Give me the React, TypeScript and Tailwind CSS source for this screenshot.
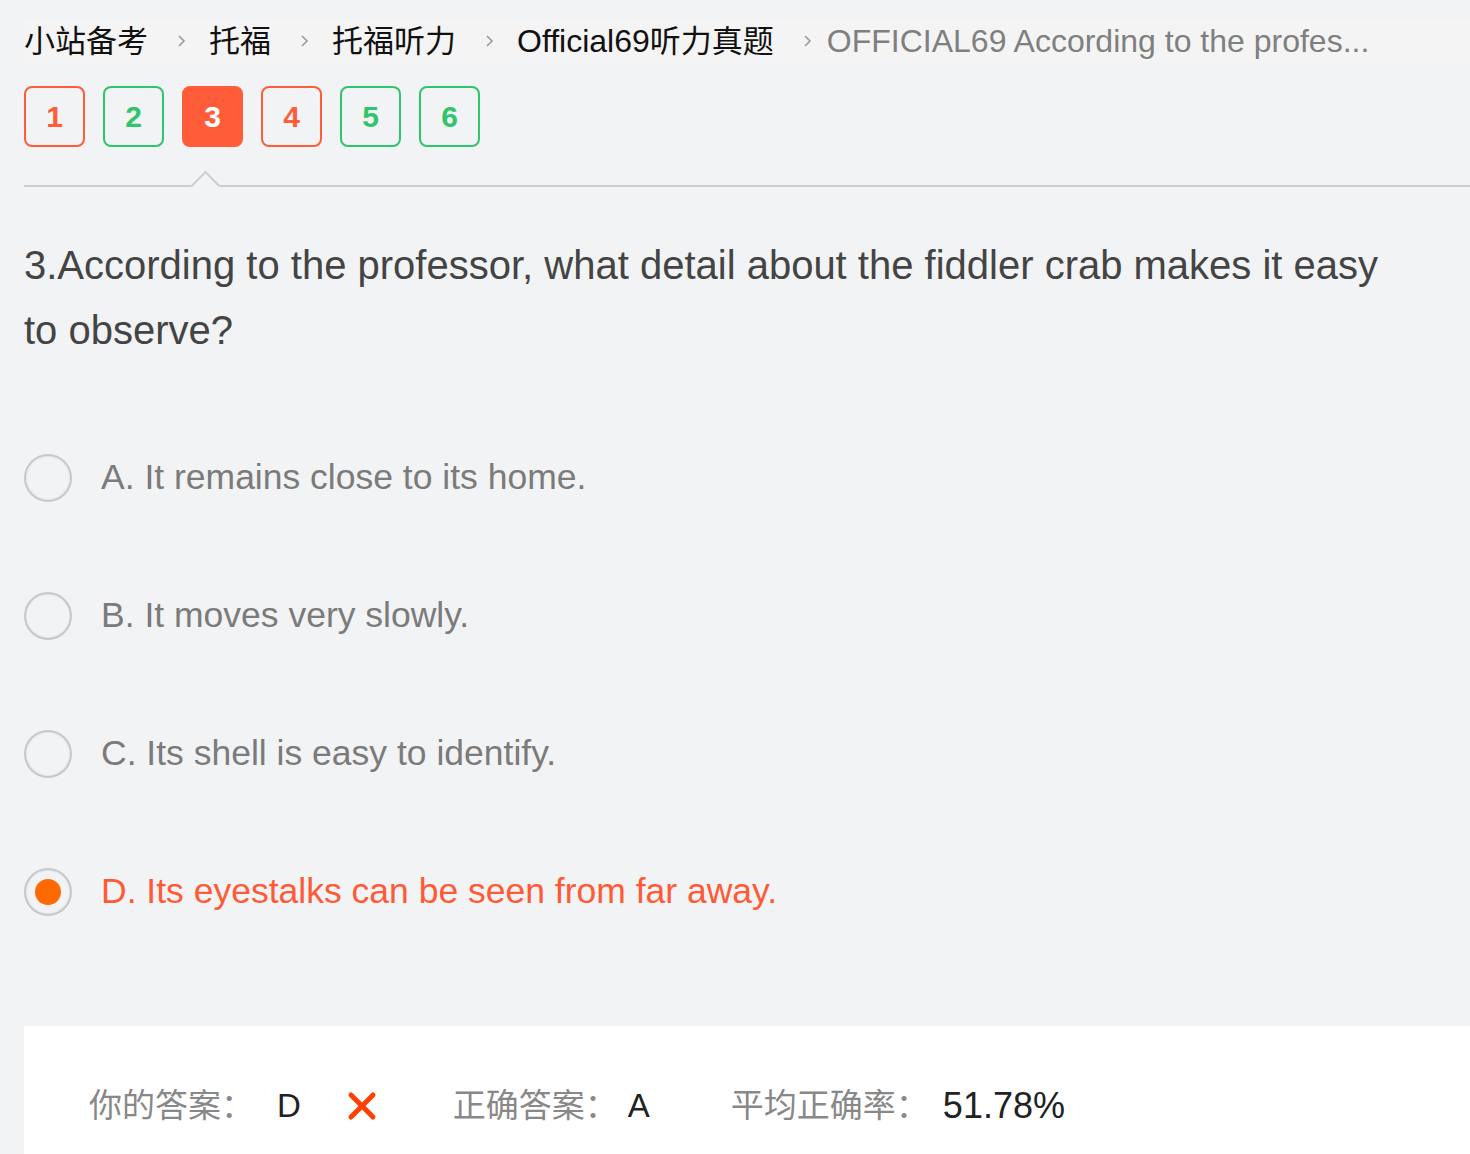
const crumbs = ["小站备考", "托福", "托福听力"]

const nums = [
  { n: 1, kind: "wrong" },
  { n: 2, kind: "right" },
  { n: 3, kind: "active" },
  { n: 4, kind: "wrong" },
  { n: 5, kind: "right" },
  { n: 6, kind: "right" },
]

const options = [
  { text: "A. It remains close to its home.", picked: false },
  { text: "B. It moves very slowly.", picked: false },
  { text: "C. Its shell is easy to identify.", picked: false },
  { text: "D. Its eyestalks can be seen from far away.", picked: true },
]

function Chevron() {
  return (
    <svg width="9" height="14" viewBox="0 0 9 14" className="ml-[29px] mr-[23px] shrink-0">
      <path d="M2 2 L7 7 L2 12" fill="none" stroke="#9a9a9a" strokeWidth="1.6" />
    </svg>
  )
}

function NumBox({ n, kind }: { n: number; kind: string }) {
  let cls = "border-2 border-[#ff5c39] text-[#ff5c39]"
  if (kind === "right") cls = "border-2 border-[#2ec56c] text-[#2ec56c]"
  if (kind === "active") cls = "border-2 border-[#ff5c39] bg-[#ff5c39] text-white"
  return (
    <div className={"w-[61px] h-[61px] rounded-[8px] flex items-center justify-center text-[30px] font-bold " + cls}>
      {n}
    </div>
  )
}

export default function App() {
  return (
    <div
      className="min-h-[1154px] bg-[#f2f3f5] pl-6 overflow-hidden"
      style={{ fontFamily: '"Liberation Sans", "Noto Sans CJK SC", sans-serif' }}
    >
      {/* breadcrumb */}
      <div className="mt-5 h-[42px] bg-[#f4f4f4] flex items-center text-[31px] leading-none whitespace-nowrap">
        {crumbs.map((c) => (
          <div key={c} className="flex items-center">
            <span className="text-[#111]">{c}</span>
            <Chevron />
          </div>
        ))}
        <span className="text-[#111]">
          <span className="text-[32px]">Official69</span>听力真题
        </span>
        <Chevron />
        <span className="-ml-[8px] text-[32px] text-[#7f7f7f]">OFFICIAL69 According to the profes...</span>
      </div>

      {/* question numbers */}
      <div className="mt-6 flex gap-[18px]">
        {nums.map((x) => (
          <NumBox key={x.n} n={x.n} kind={x.kind} />
        ))}
      </div>

      {/* divider with notch */}
      <div className="relative mt-[38px] h-[2px] bg-[#cdcdcf]">
        <div className="absolute left-[171px] -top-[10px] w-[21px] h-[21px] rotate-45 border-l-2 border-t-2 border-[#cdcdcf] bg-[#f2f3f5]" />
      </div>

      {/* question */}
      <div className="mt-[46px] max-w-[1370px] text-[40px] leading-[65px] text-[#444]">
        3.According to the professor, what detail about the fiddler crab makes it easy to observe?
      </div>

      {/* options */}
      <div className="mt-[46px] flex flex-col">
        {options.map((o) => (
          <div key={o.text} className="h-[138px] flex items-center">
            <div className="w-12 h-12 rounded-full border-2 border-[#c8c8c8] shadow-[inset_0_0_2px_rgba(0,0,0,0.15)] flex items-center justify-center shrink-0">
              {o.picked && <div className="w-[26px] h-[26px] rounded-full bg-[#ff6a00]" />}
            </div>
            <span className={"ml-[29px] text-[35.5px] " + (o.picked ? "text-[#ff5a36]" : "text-[#7b7b7b]")}>
              {o.text}
            </span>
          </div>
        ))}
      </div>

      {/* result panel */}
      <div className="mt-[65px] h-[140px] bg-white pt-[60px] pl-[65px] flex items-start text-[33px] leading-[40px] whitespace-nowrap">
        <span className="text-[#888]">你的答案：</span>
        <span className="ml-[23px] text-[#222]">D</span>
        <svg width="30" height="30" viewBox="0 0 30 30" className="ml-[46px] mt-[5px]">
          <path d="M4 4 L26 26 M26 4 L4 26" stroke="#ff4000" strokeWidth="5" strokeLinecap="round" />
        </svg>
        <span className="ml-[76px] text-[#888]">正确答案：</span>
        <span className="ml-[10px] text-[#222]">A</span>
        <span className="ml-[81px] text-[#888]">平均正确率：</span>
        <span className="ml-[14px] text-[36px] text-[#222]">51.78%</span>
      </div>
    </div>
  )
}
